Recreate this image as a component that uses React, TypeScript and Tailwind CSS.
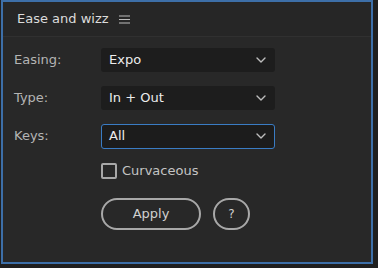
import React from "react";

const Chevron = () => (
  <svg width="10" height="6" viewBox="0 0 10 6" fill="none" stroke="#bdbdbd" strokeWidth="1.4" strokeLinecap="round" strokeLinejoin="round">
    <path d="M1 1l4 4 4-4" />
  </svg>
);

function Row({ label, value, active }: { label: string; value: string; active?: boolean }) {
  return (
    <div className="flex items-center h-[24px]">
      <div className="w-[87px] text-[13px] text-[#b4b4b4]">{label}</div>
      <div
        className={
          active
            ? "flex items-center justify-between w-[174px] h-[25px] rounded-[3px] bg-[#1c1c1c] border border-[#3a7cc4] pl-[7px] pr-[8px] text-[13px] text-[#ececec]"
            : "flex items-center justify-between w-[174px] h-[24px] rounded-[3px] bg-[#1d1d1d] pl-[8px] pr-[9px] text-[13px] text-[#ececec]"
        }
      >
        <span>{value}</span>
        <Chevron />
      </div>
    </div>
  );
}

export default function App() {
  return (
    <div className="w-[378px] h-[268px] bg-[#1f1f1f] pl-[1px]" style={{ fontFamily: '"DejaVu Sans", sans-serif' }}>
      <div className="w-[372px] h-[264px] border-2 border-[#3d6fa8] bg-[#282828] flex flex-col">
        <div className="h-[35px] flex items-center pl-[14px] gap-[10px] border-b border-[#303030] bg-[#262626]">
          <span className="text-[13px] text-[#dcdcdc]">Ease and wizz</span>
          <svg width="11" height="9" viewBox="0 0 11 9" stroke="#bcbcbc" strokeWidth="1.2">
            <path d="M0 1h11M0 4.5h11M0 8h11" />
          </svg>
        </div>
        <div className="pl-[11px] pt-[11px] flex flex-col gap-[14px]">
          <Row label="Easing:" value="Expo" />
          <Row label="Type:" value="In + Out" />
          <Row label="Keys:" value="All" active />
        </div>
        <div className="pl-[98px] mt-[13px] flex items-center gap-[5px]">
          <div className="w-[16px] h-[16px] border-2 border-[#a8a8a8] rounded-[2px]" />
          <span className="text-[13px] text-[#c4c4c4]">Curvaceous</span>
        </div>
        <div className="pl-[98px] mt-[17px] flex items-center gap-[12px]">
          <div className="w-[100px] h-[32px] rounded-full border-2 border-[#a8a8a8] flex items-center justify-center text-[13px] text-[#d0d0d0]">
            Apply
          </div>
          <div className="w-[37px] h-[32px] rounded-full border-2 border-[#a8a8a8] flex items-center justify-center text-[12px] text-[#d0d0d0]">
            ?
          </div>
        </div>
      </div>
    </div>
  );
}
